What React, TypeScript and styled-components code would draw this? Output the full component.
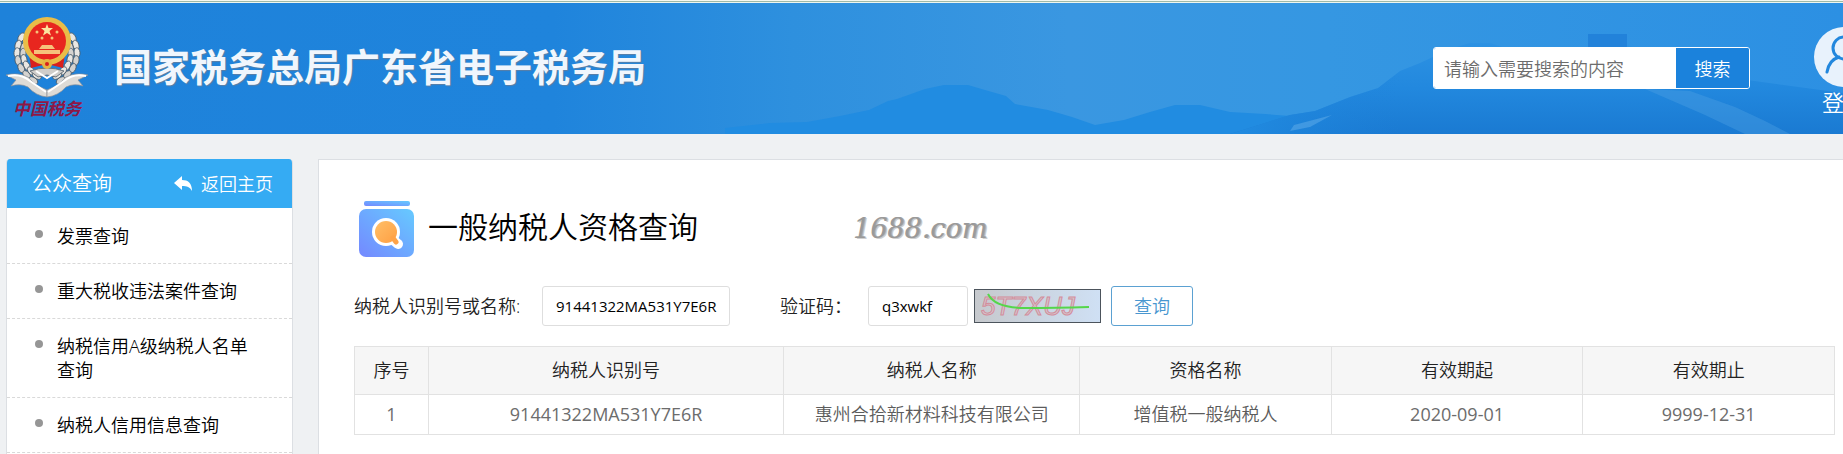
import React from "react";
import styled, { createGlobalStyle } from "styled-components";

const GlobalStyle = createGlobalStyle`
  *, *::before, *::after { box-sizing: border-box; }
  body {
    margin: 0;
    background: #eff1f3;
    color: #000;
    font-family: "Open Sans", "Noto Sans CJK SC", sans-serif;
    font-size: 18px;
    font-weight: 350;
    line-height: 24px;
    overflow: hidden;
  }
  button, input { font: inherit; }
  a { color: inherit; text-decoration: none; }
`;

const Page = styled.div`
  border-top: 1px solid #f4f8f0;
`;

const Header = styled.header`
  position: relative;
  display: flex;
  align-items: center;
  height: 133px;
  padding-left: 6px;
  border-top: 1px solid #9fb9a8;
  overflow: hidden;
  background: linear-gradient(90deg, #1e82da 0%, #1f84dc 30%, #2e90de 43%, #3a97e1 58%, #3597e2 72%, #2c90e3 100%);
  box-shadow: inset 0 1px 0 #eef6ee;
  color: #fff;
`;

const Scenery = styled.svg`
  position: absolute;
  inset: 1px 0 0 0;
  width: 100%;
  height: 131px;
`;

const Brand = styled.div`
  position: relative;
  display: flex;
  flex: 1;
  align-items: center;
`;

const Emblem = styled.div`
  display: flex;
  flex-direction: column;
  align-items: center;
  width: 82px;
`;

const EmblemCaption = styled.span`
  color: #8e1846;
  font-size: 17px;
  font-style: italic;
  font-weight: 700;
  line-height: 20px;
`;

const SiteTitle = styled.h1`
  margin: 0 0 4px 26px;
  color: #f0f6fd;
  font-size: 38px;
  font-weight: 700;
  line-height: 48px;
  white-space: nowrap;
  text-shadow: 1px 1px 1px #5a7fa6;
`;

const SearchForm = styled.form`
  position: relative;
  display: flex;
  width: 317px;
  height: 42px;
  border: 1px solid #fff;
  border-radius: 3px;
  overflow: hidden;
`;

const SearchInput = styled.input`
  flex: 1;
  min-width: 0;
  padding: 2px 10px 0;
  border: 0;
  background: #fff;
  &::placeholder { color: #6c6c6c; opacity: 1; }
`;

const SearchButton = styled.button`
  width: 73px;
  padding: 2px 0 0;
  border: 0;
  background: #1b82dc;
  color: #fff;
`;

const Login = styled.a`
  position: relative;
  display: flex;
  flex-direction: column;
  align-items: center;
  width: 60px;
  margin: 8px -31px 0 64px;
  font-size: 22px;
  line-height: 30px;
`;

const Body = styled.div`
  display: flex;
  gap: 25px;
  padding: 25px 0 0 6px;
`;

const Sidebar = styled.aside`
  flex: none;
  width: 287px;
  border: 1px solid #dcdfe3;
  border-top: 0;
  border-radius: 4px 4px 0 0;
  background: #fff;
  overflow: hidden;
`;

const SidebarHead = styled.div`
  display: flex;
  align-items: center;
  justify-content: space-between;
  height: 49px;
  margin: 0 -1px;
  padding: 0 20px 0 26px;
  background: #35abf3;
  color: #fff;
`;

const SidebarTitle = styled.h2`
  margin: 0;
  font-size: 20px;
  font-weight: 350;
`;

const BackLink = styled.a`
  display: flex;
  align-items: center;
  gap: 8px;
`;

const Menu = styled.ul`
  margin: 0;
  padding: 1px 0 0;
  list-style: none;
`;

const MenuItem = styled.li`
  display: flex;
  padding: 15px 36px 15px 28px;
  border-bottom: 1px dashed #d9d9d9;
  &::before {
    content: "";
    flex: none;
    width: 8px;
    height: 8px;
    margin: 6px 14px 0 0;
    border-radius: 50%;
    background: #969696;
  }
`;

const Main = styled.main`
  flex: 1;
  min-width: 0;
  min-height: 295px;
  padding: 41px 8px 20px 35px;
  border: 1px solid #dcdfe3;
  border-width: 1px 0 0 1px;
  background: #fff;
`;

const TitleRow = styled.div`
  display: flex;
  align-items: center;
  padding-left: 5px;
`;

const PageTitle = styled.h2`
  margin: 0 0 4px 14px;
  font-size: 30px;
  font-weight: 350;
  line-height: 52px;
`;

const Watermark = styled.span`
  margin-left: 155px;
  color: #9a9a9a;
  font-family: "DejaVu Serif", serif;
  font-size: 27px;
  font-style: italic;
  font-weight: 400;
  line-height: 56px;
  text-shadow: 1px 0 0 #acacac, 2px 1px 0 #cfcfcf;
`;

const QueryForm = styled.form`
  display: flex;
  align-items: center;
  margin-top: 29px;
`;

const FieldLabel = styled.label<{ $width: number }>`
  flex: none;
  width: ${(p) => p.$width}px;
  color: #222;
`;

const FieldInput = styled.input<{ $width: number }>`
  width: ${(p) => p.$width}px;
  height: 40px;
  padding: 0 0 0 13px;
  border: 1px solid #dedede;
  border-radius: 3px;
  background: #fff;
  color: #000;
  font-size: 15px;
  font-weight: 400;
`;

const SecondField = styled.div`
  display: flex;
  align-items: center;
  margin-left: 50px;
`;

const Captcha = styled.svg`
  display: block;
  width: 127px;
  height: 34px;
  margin: 0 10px 0 6px;
  border: 1px solid #4c545c;
`;

const QueryButton = styled.button`
  width: 82px;
  height: 40px;
  padding: 0;
  border: 1px solid #5ba1d2;
  border-radius: 3px;
  background: #fff;
  color: #4997d0;
`;

const Results = styled.table`
  width: 100%;
  margin-top: 20px;
  border-collapse: collapse;
  table-layout: fixed;
  text-align: center;
`;

const HeadCell = styled.th<{ $share: number }>`
  width: ${(p) => p.$share}%;
  height: 48px;
  padding: 0 0 2px;
  border: 1px solid #e2e2e2;
  background: #f6f6f6;
  color: #222;
  font-weight: 350;
`;

const Cell = styled.td<{ $code?: boolean }>`
  height: 40px;
  padding: 0 0 2px;
  border: 1px solid #e2e2e2;
  color: ${(p) => (p.$code ? "#6c6c6c" : "#5c5c5c")};
  font-weight: ${(p) => (p.$code ? 400 : 350)};
`;

const menu = ["发票查询", "重大税收违法案件查询", "纳税信用A级纳税人名单查询", "纳税人信用信息查询"];

const columns = [
  { name: "序号", share: 5, value: "1", code: true },
  { name: "纳税人识别号", share: 24, value: "91441322MA531Y7E6R", code: true },
  { name: "纳税人名称", share: 20, value: "惠州合拾新材料科技有限公司" },
  { name: "资格名称", share: 17, value: "增值税一般纳税人" },
  { name: "有效期起", share: 17, value: "2020-09-01", code: true },
  { name: "有效期止", share: 17, value: "9999-12-31", code: true },
];

const Mountains = () => (
  <Scenery viewBox="0 0 1843 131" preserveAspectRatio="none" aria-hidden="true">
    <defs>
      <linearGradient id="peak" x1="0" y1="0" x2="0" y2="1">
        <stop offset="0" stopColor="#2d92e3" />
        <stop offset=".5" stopColor="#2288de" />
        <stop offset="1" stopColor="#1a7ad2" />
      </linearGradient>
      <linearGradient id="ridge" gradientUnits="userSpaceOnUse" x1="1230" y1="0" x2="1400" y2="0">
        <stop offset="0" stopColor="#218ce1" />
        <stop offset="1" stopColor="#1e82da" stopOpacity="0" />
      </linearGradient>
    </defs>
    <path d="M725 125L770 120L807 119L840 113L869 107L888 98L897 96L925 86L944 82L968 82L985 87L1006 93L1015 101L1048 107L1072 114L1095 122L1124 117L1150 109L1175 102L1200 102L1230 109L1265 111L1290 113V131H725Z" fill="#218ce1" />
    <path d="M1230 131L1290 112L1315 108L1350 94L1378 85L1400 68L1420 60L1450 46L1470 40L1490 40L1515 48L1550 50H1588L1627 42L1680 60L1740 76L1843 90V131Z" fill="url(#peak)" />
    <path d="M1230 131L1290 112L1315 108L1350 94L1378 85L1400 68V131Z" fill="url(#ridge)" />
    <path d="M1294 122L1332 112L1310 124L1290 128Z" fill="#62aeea" opacity=".5" />
    <path d="M1588 31H1627V50H1588Z" fill="#2282da" />
    <path d="M1645 86L1690 88L1735 104L1765 118L1790 131H1745L1705 112Z" fill="#4a9de2" opacity=".45" />
  </Scenery>
);

const wheat = [
  [18, 22, -58], [15, 29, -72], [14, 36, -85], [15, 43, 80], [18, 50, 65], [23, 56, 50], [29, 61, 35],
];

const EmblemArt = () => (
  <svg width="82" height="82" viewBox="0 0 82 82" aria-hidden="true">
    {[0, 1].map((side) => (
      <g key={side} transform={side ? "translate(82 0) scale(-1 1)" : undefined}>
        {wheat.map(([x, y, a], i) => (
          <g key={i} transform={`translate(${x} ${y}) rotate(${a})`}>
            <ellipse rx="5" ry="3" cy="-3" fill="#e9e7e3" stroke="#4c5964" strokeWidth=".8" />
            <ellipse rx="5" ry="3" cy="3" fill="#d5d3d0" stroke="#4c5964" strokeWidth=".8" />
          </g>
        ))}
        <path d="M0 58Q12 55 22 60L30 68L41 73V80Q30 79 22 70Q14 66 5 69L10 63Z" fill="#dedbd6" stroke="#8a9199" strokeWidth=".7" />
        <path d="M2 59Q15 56 24 64L40 75" fill="none" stroke="#fff" strokeWidth="2" />
      </g>
    ))}
    <path d="M24 54Q41 48 58 54L50 60L41 58L32 60Z" fill="#cfcdca" stroke="#68737d" />
    <path d="M30 54L41 61L52 54" fill="none" stroke="#fff" strokeWidth="2" />
    <path d="M23 36H59L57 51L41 47L25 51Z" fill="#d8201d" />
    <circle cx="41" cy="24" r="24" fill="#e9bd48" />
    <circle cx="41" cy="24" r="19" fill="#e8261f" />
    <path d="M41 7l1.500 4h4.500l-3.500 3 1.500 4.500-4-2.500-4 2.500 1.500-4.500-3.500-3h4.500z" fill="#fbe5a0" />
    <g fill="#f6c27b">
      <circle cx="31" cy="15" r="1.500" />
      <circle cx="51" cy="15" r="1.500" />
      <circle cx="36" cy="21" r="1.500" />
      <circle cx="46" cy="21" r="1.500" />
      <path d="M36 28H46L49 32H33ZM28 33H54V37H28Z" />
    </g>
    <circle cx="41" cy="47" r="5" fill="#e6b543" />
    <circle cx="41" cy="47" r="2" fill="#d8201d" />
  </svg>
);

const TitleIcon = () => (
  <svg width="55" height="56" viewBox="0 0 55 56" aria-hidden="true">
    <defs>
      <linearGradient id="box" x1="0" y1="1" x2="1" y2="0">
        <stop offset="0" stopColor="#7488ff" />
        <stop offset="1" stopColor="#66caff" />
      </linearGradient>
      <linearGradient id="lens" x1="0" y1="0" x2="1" y2="1">
        <stop offset="0" stopColor="#ffbf68" />
        <stop offset="1" stopColor="#ff9f43" />
      </linearGradient>
    </defs>
    <rect x="5" y="0" width="46" height="5" rx="2" fill="url(#box)" />
    <rect x="0" y="8" width="55" height="48" rx="7" fill="url(#box)" />
    <path d="M33 38L39 43" stroke="#fff" strokeWidth="10" strokeLinecap="round" />
    <circle cx="27" cy="31" r="14" fill="#fff" />
    <circle cx="27" cy="31" r="11" fill="url(#lens)" />
    <path d="M34 37L37 41" stroke="#ffa348" strokeWidth="5" strokeLinecap="round" />
  </svg>
);

const stop = (e: React.FormEvent) => e.preventDefault();

export default function App() {
  return (
    <Page>
      <GlobalStyle />
      <Header>
        <Mountains />
        <Brand>
          <Emblem>
            <EmblemArt />
            <EmblemCaption>中国税务</EmblemCaption>
          </Emblem>
          <SiteTitle>国家税务总局广东省电子税务局</SiteTitle>
        </Brand>
        <SearchForm onSubmit={stop}>
          <SearchInput type="text" aria-label="搜索" placeholder="请输入需要搜索的内容" />
          <SearchButton type="submit">搜索</SearchButton>
        </SearchForm>
        <Login href="#login">
          <svg width="60" height="60" viewBox="0 0 60 60" fill="none" aria-hidden="true">
            <circle cx="30" cy="30" r="30" fill="#e8f2fc" />
            <circle cx="30" cy="21" r="11" stroke="#2287dd" strokeWidth="3" />
            <path d="M13 45Q15 33 25 30M47 45Q45 33 35 30" stroke="#2287dd" strokeWidth="3" strokeLinecap="round" />
          </svg>
          <span>登录</span>
        </Login>
      </Header>
      <Body>
        <Sidebar>
          <SidebarHead>
            <SidebarTitle>公众查询</SidebarTitle>
            <BackLink href="#home">
              <svg width="19" height="16" viewBox="0 0 19 16" aria-hidden="true">
                <path d="M8 0V4C14 4 18 7 18 15C16 11 13 10 8 10V14L0 7Z" fill="#fff" />
              </svg>
              返回主页
            </BackLink>
          </SidebarHead>
          <Menu>
            {menu.map((text) => (
              <MenuItem key={text}>
                <a href="#query">{text}</a>
              </MenuItem>
            ))}
          </Menu>
        </Sidebar>
        <Main>
          <TitleRow>
            <TitleIcon />
            <PageTitle>一般纳税人资格查询</PageTitle>
            <Watermark>1688.com</Watermark>
          </TitleRow>
          <QueryForm onSubmit={stop}>
            <FieldLabel htmlFor="taxpayer" $width={188}>纳税人识别号或名称:</FieldLabel>
            <FieldInput id="taxpayer" type="text" $width={188} defaultValue="91441322MA531Y7E6R" />
            <SecondField>
              <FieldLabel htmlFor="code" $width={88}>验证码：</FieldLabel>
              <FieldInput id="code" type="text" $width={100} defaultValue="q3xwkf" />
            </SecondField>
            <Captcha viewBox="0 0 125 32" role="img" aria-label="验证码">
              <defs>
                <linearGradient id="paper">
                  <stop offset="0" stopColor="#c6c9cd" />
                  <stop offset="1" stopColor="#cfe0f4" />
                </linearGradient>
              </defs>
              <rect width="125" height="32" fill="url(#paper)" />
              <text x="6" y="25" fill="#d3c4cb" stroke="#d38d9b" strokeWidth="1" fontFamily="Liberation Sans, sans-serif" fontSize="26" fontStyle="italic" fontWeight="400">5T7XUJ</text>
              <path d="M13 4Q20 18 50 18T114 17" fill="none" stroke="#55d64a" strokeWidth="2" />
            </Captcha>
            <QueryButton type="submit">查询</QueryButton>
          </QueryForm>
          <Results>
            <thead>
              <tr>
                {columns.map((c) => (
                  <HeadCell key={c.name} scope="col" $share={c.share}>{c.name}</HeadCell>
                ))}
              </tr>
            </thead>
            <tbody>
              <tr>
                {columns.map((c) => (
                  <Cell key={c.name} $code={c.code}>{c.value}</Cell>
                ))}
              </tr>
            </tbody>
          </Results>
        </Main>
      </Body>
    </Page>
  );
}
